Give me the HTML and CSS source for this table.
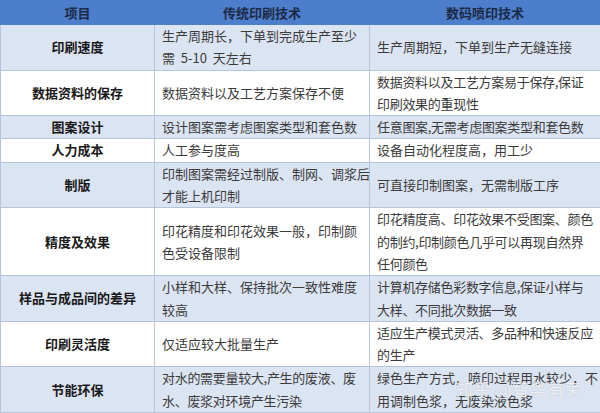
FILE: index.html
```html
<!DOCTYPE html>
<html lang="zh">
<head>
<meta charset="utf-8">
<link rel="stylesheet" href="styles.css">
</head>
<body>
<div class="wrap">
<table class="cmp">
  <colgroup><col class="c1"><col class="c2"><col class="c3"></colgroup>
  <thead>
    <tr><th>项目</th><th>传统印刷技术</th><th>数码喷印技术</th></tr>
  </thead>
  <tbody>
    <tr class="alt"><td class="k">印刷速度</td><td>生产周期长，下单到完成生产至少<br>需&nbsp; 5-10&nbsp; 天左右</td><td>生产周期短，下单到生产无缝连接</td></tr>
    <tr><td class="k">数据资料的保存</td><td>数据资料以及工艺方案保存不便</td><td class="n">数据资料以及工艺方案易于保存,保证<br>印刷效果的重现性</td></tr>
    <tr class="alt"><td class="k">图案设计</td><td>设计图案需考虑图案类型和套色数</td><td class="n">任意图案,无需考虑图案类型和套色数</td></tr>
    <tr><td class="k">人力成本</td><td>人工参与度高</td><td>设备自动化程度高，用工少</td></tr>
    <tr class="alt"><td class="k">制版</td><td>印制图案需经过制版、制网、调浆后<br>才能上机印制</td><td>可直接印制图案，无需制版工序</td></tr>
    <tr><td class="k">精度及效果</td><td>印花精度和印花效果一般，印制颜<br>色受设备限制</td><td class="n">印花精度高、印花效果不受图案、颜色<br>的制约,印制颜色几乎可以再现自然界<br>任何颜色</td></tr>
    <tr class="alt"><td class="k">样品与成品间的差异</td><td>小样和大样、保持批次一致性难度<br>较高</td><td class="n">计算机存储色彩数字信息,保证小样与<br>大样、不同批次数据一致</td></tr>
    <tr><td class="k">印刷灵活度</td><td>仅适应较大批量生产</td><td class="n">适应生产模式灵活、多品种和快速反应<br>的生产</td></tr>
    <tr class="alt"><td class="k">节能环保</td><td class="n">对水的需要量较大,产生的废液、废<br>水、废浆对环境产生污染</td><td>绿色生产方式，喷印过程用水较少，不<br>用调制色浆，无废染液色浆</td></tr>
  </tbody>
</table>
<div class="mark">知乎 @智华有束</div>
</div>
</body>
</html>
```

FILE: styles.css
```css
html, body {
  margin: 0;
  padding: 0;
  background: #ffffff;
}
body {
  font-family: "Noto Sans CJK SC", "Noto Sans", sans-serif;
  width: 600px;
  height: 413px;
  overflow: hidden;
}
.wrap {
  position: relative;
  width: 600px;
}
.cmp {
  width: 600px;
  border-collapse: collapse;
  table-layout: fixed;
  font-size: 13px;
  color: #3b3b3b;
}
.c1 { width: 154px; }
.c2 { width: 215px; }
.c3 { width: 231px; }
.cmp th {
  height: 23px;
  padding: 0;
  background: #4c7ecb;
  color: #1c2a48;
  font-weight: bold;
  font-size: 13px;
  line-height: 23px;
  text-align: center;
  border: 1px solid #4c7ecb;
}
.cmp td {
  padding: 0 4px 0 7px;
  line-height: 22.3px;
  vertical-align: middle;
  border: 1px solid #b6c5dc;
  white-space: nowrap;
}
.cmp tr.alt td {
  background: #dbe4f2;
}
.cmp td.k {
  text-align: center;
  font-weight: bold;
  color: #1a1a1a;
  padding: 0;
}
.cmp td.n {
  letter-spacing: -0.3px;
}
.mark {
  position: absolute;
  left: 456px;
  top: 376px;
  font-size: 17px;
  color: rgba(255, 255, 255, 0.8);
  text-shadow: 0 0 1px rgba(120, 130, 150, 0.55);
  letter-spacing: 0.5px;
  white-space: nowrap;
}
```
